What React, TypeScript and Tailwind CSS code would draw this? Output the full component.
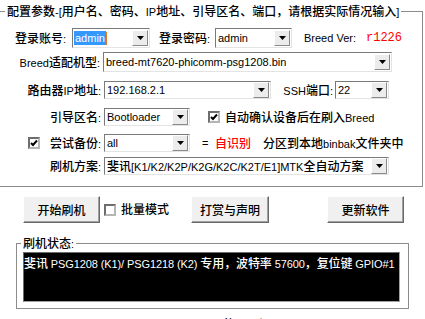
import React from "react";

const CJK = /([\u3000-\u9fff\uff00-\uffef]+)/;

// CJK runs in Noto at 12px, latin runs in Liberation Sans at 11px (like the old Win UI font)
function Mix({ text }: { text: string }) {
  const parts = text.split(CJK);
  return (
    <>
      {parts.map((p, i) =>
        p === "" ? null : CJK.test(p) ? (
          <span key={i} className="font-['Noto_Sans_CJK_SC',sans-serif] text-[12px] font-medium">
            {p}
          </span>
        ) : (
          <span key={i} className="font-['Liberation_Sans',sans-serif] text-[11px]">
            {p}
          </span>
        )
      )}
    </>
  );
}

function Arrow() {
  return (
    <div className="ml-auto mr-[1px] flex h-[16px] w-[16px] shrink-0 items-center justify-center border border-t-white border-l-white border-r-[#8a8a8a] border-b-[#8a8a8a] bg-[#ececec]">
      <svg width="7" height="4" viewBox="0 0 7 4">
        <path d="M0 0h7L3.5 4z" fill="#000" />
      </svg>
    </div>
  );
}

function Combo({ value, className, selected }: { value: string; className: string; selected?: boolean }) {
  return (
    <div
      className={`flex shrink-0 items-center border border-t-[#7a7a7a] border-l-[#7a7a7a] border-r-[#e3e3e3] border-b-[#e3e3e3] bg-white ${className}`}
    >
      {selected ? (
        <span className="ml-[1px] flex items-center">
          <span className="bg-[#3399ff] px-[1px] text-white">
            <Mix text={value} />
          </span>
          <span className="h-[13px] w-[1px] bg-[#e07a1f]" />
        </span>
      ) : (
        <span className="ml-[2px] whitespace-nowrap">
          <Mix text={value} />
        </span>
      )}
      <Arrow />
    </div>
  );
}

function Check({ checked }: { checked?: boolean }) {
  return (
    <div className="flex h-[12px] w-[12px] shrink-0 items-center justify-center border-2 border-t-[#6d6d6d] border-l-[#6d6d6d] border-r-[#b5b5b5] border-b-[#b5b5b5] bg-white">
      {checked && (
        <svg width="8" height="8" viewBox="0 0 8 8">
          <path d="M1 4L3 6L7 1.5" fill="none" stroke="#000" strokeWidth="2" />
        </svg>
      )}
    </div>
  );
}

function Button({ label, className }: { label: string; className: string }) {
  return (
    <div
      className={`flex h-[27px] shrink-0 items-center justify-center border border-t-white border-l-white border-r-[#696969] border-b-[#696969] bg-[#f0f0f0] shadow-[inset_-1px_-1px_0_#a0a0a0] ${className}`}
    >
      <Mix text={label} />
    </div>
  );
}

export default function App() {
  return (
    <div className="h-[319px] w-[425px] overflow-hidden bg-white text-[12px] leading-[14px] text-black">
      {/* 配置参数 */}
      <fieldset className="mt-[3px] -ml-[1px] w-[424px] border border-[#8c8c8c] pb-[11px]">
        <legend className="ml-[5px] px-[2px] leading-[16px] whitespace-nowrap">
          <Mix text="配置参数-[用户名、密码、IP地址、引导区名、端口，请根据实际情况输入]" />
        </legend>

        <div className="mt-[8px] flex h-[20px] items-center">
          <span className="w-[72px] shrink-0 pl-[15px] whitespace-nowrap">
            <Mix text="登录账号:" />
          </span>
          <Combo value="admin" selected className="h-[20px] w-[78px]" />
          <span className="ml-[9px] w-[56px] shrink-0 whitespace-nowrap">
            <Mix text="登录密码:" />
          </span>
          <Combo value="admin" className="h-[20px] w-[77px]" />
          <span className="ml-[12px] w-[62px] shrink-0 whitespace-nowrap">
            <Mix text="Breed Ver:" />
          </span>
          <span className="font-['Liberation_Mono',monospace] text-[12px] text-[#ff0000]">r1226</span>
        </div>

        <div className="mt-[4px] flex h-[20px] items-center">
          <span className="w-[103px] shrink-0 pr-[3px] text-right whitespace-nowrap">
            <Mix text="Breed适配机型:" />
          </span>
          <Combo value="breed-mt7620-phicomm-psg1208.bin" className="h-[20px] w-[289px]" />
        </div>

        <div className="mt-[9px] flex h-[18px] items-center">
          <span className="w-[104px] shrink-0 pr-[3px] text-right whitespace-nowrap">
            <Mix text="路由器IP地址:" />
          </span>
          <Combo value="192.168.2.1" className="h-[18px] w-[167px]" />
          <span className="w-[64px] shrink-0 pr-[2px] text-right whitespace-nowrap">
            <Mix text="SSH端口:" />
          </span>
          <Combo value="22" className="h-[18px] w-[54px]" />
        </div>

        <div className="mt-[9px] flex h-[18px] items-center">
          <span className="w-[104px] shrink-0 pr-[3px] text-right">
            <Mix text="引导区名:" />
          </span>
          <Combo value="Bootloader" className="h-[18px] w-[86px]" />
          <div className="ml-[18px] shrink-0">
            <Check checked />
          </div>
          <span className="ml-[5px] whitespace-nowrap">
            <Mix text="自动确认设备后在刷入Breed" />
          </span>
        </div>

        <div className="mt-[8px] flex h-[18px] items-center">
          <div className="ml-[28px] shrink-0">
            <Check checked />
          </div>
          <span className="w-[64px] shrink-0 pr-[3px] text-right">
            <Mix text="尝试备份:" />
          </span>
          <Combo value="all" className="h-[18px] w-[86px]" />
          <span className="ml-[12px] w-[13px] shrink-0">
            <Mix text="=" />
          </span>
          <span className="w-[48px] shrink-0 text-[#ff0000]">
            <Mix text="自识别" />
          </span>
          <span className="whitespace-nowrap">
            <Mix text="分区到本地binbak文件夹中" />
          </span>
        </div>

        <div className="mt-[5px] flex h-[18px] items-center">
          <span className="w-[104px] shrink-0 pr-[3px] text-right">
            <Mix text="刷机方案:" />
          </span>
          <Combo value="斐讯[K1/K2/K2P/K2G/K2C/K2T/E1]MTK全自动方案" className="h-[18px] w-[285px]" />
        </div>
      </fieldset>

      {/* buttons */}
      <div className="mt-[9px] flex items-center">
        <Button label="开始刷机" className="ml-[23px] w-[77px]" />
        <div className="flex w-[91px] shrink-0 items-center">
          <div className="ml-[4px]">
            <Check />
          </div>
          <span className="ml-[5px]">
            <Mix text="批量模式" />
          </span>
        </div>
        <Button label="打赏与声明" className="w-[78px]" />
        <Button label="更新软件" className="ml-[58px] w-[77px]" />
      </div>

      {/* 刷机状态 */}
      <fieldset className="mt-[12px] ml-[16px] w-[393px] border border-[#8c8c8c] pb-[6px]">
        <legend className="ml-[4px] px-[2px] leading-[16px]">
          <Mix text="刷机状态:" />
        </legend>
        <div className="ml-[6px] h-[50px] w-[377px] overflow-hidden border border-t-[#6d6d6d] border-l-[#6d6d6d] border-r-[#a0a0a0] border-b-[#a0a0a0] bg-black pt-[3px] whitespace-nowrap text-white tracking-[-0.1px]">
          <Mix text="斐讯 PSG1208 (K1)/ PSG1218 (K2) 专用，波特率 57600，复位键 GPIO#1" />
        </div>
      </fieldset>

      <div className="mt-[8px] ml-[168px] whitespace-nowrap">
        <Mix text="Breed Web使用入门" />
      </div>
    </div>
  );
}
